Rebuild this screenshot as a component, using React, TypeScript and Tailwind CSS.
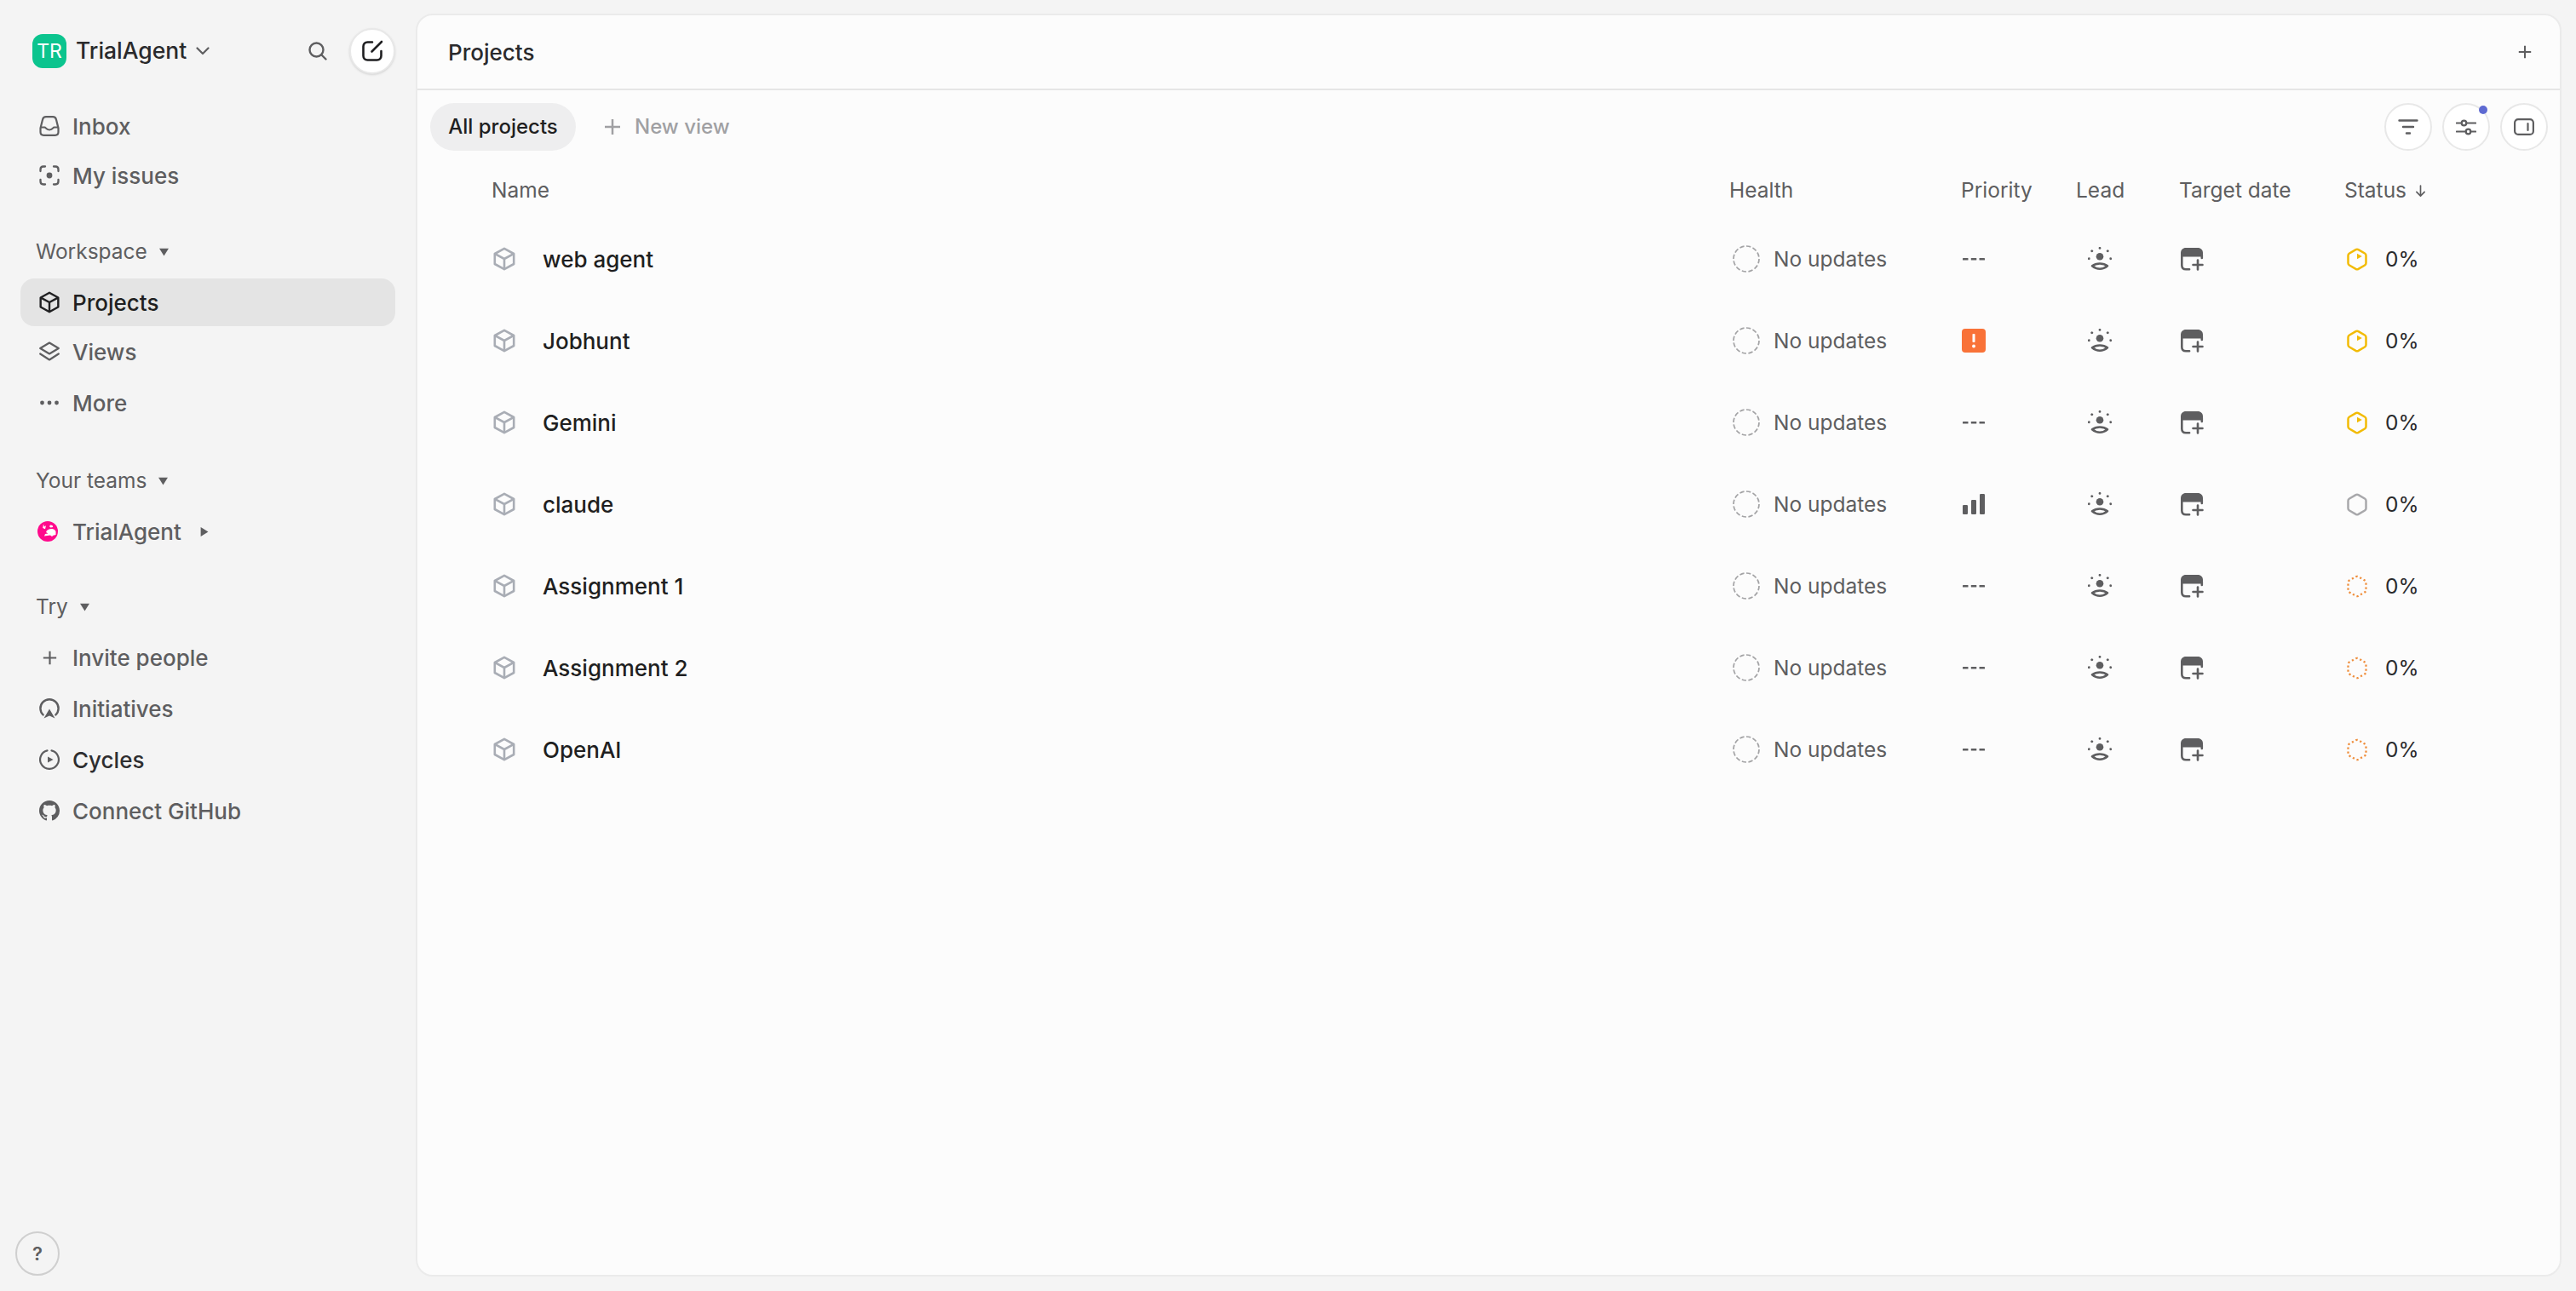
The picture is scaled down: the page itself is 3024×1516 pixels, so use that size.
import React from "react";

type IconProps = { className?: string };

const Cube = ({ className }: IconProps) => (
  <svg viewBox="0 0 26 28" fill="none" stroke="currentColor" strokeWidth="2.600" strokeLinejoin="round" className={className}>
    <path d="M13 1.800 24.200 8v12L13 26.200 1.800 20V8Z" />
    <path d="M2.200 8.200 13 14l10.800-5.800M13 14v12" />
  </svg>
);

const Inbox = ({ className }: IconProps) => (
  <svg viewBox="0 0 24 24" fill="none" stroke="currentColor" strokeWidth="2.200" className={className}>
    <path d="M1.500 14.500 4 4.500C4.500 2.400 6 1.200 8 1.200h8c2 0 3.500 1.200 4 3.300l2.500 10V19c0 2.200-1.500 3.800-3.800 3.800H5.300C3 22.800 1.500 21.200 1.500 19Z" />
    <path d="M1.500 13.500h5c1.200 0 1.700 3 5.500 3s4.300-3 5.500-3h5" />
  </svg>
);

const MyIssues = ({ className }: IconProps) => (
  <svg viewBox="0 0 24 24" fill="none" stroke="currentColor" strokeWidth="2.300" strokeLinecap="round" className={className}>
    <path d="M1.500 7V5c0-2 1.500-3.500 3.500-3.500h2M17 1.500h2c2 0 3.500 1.500 3.500 3.500v2M22.500 17v2c0 2-1.500 3.500-3.500 3.500h-2M7 22.500H5c-2 0-3.500-1.500-3.500-3.500v-2" />
    <circle cx="12" cy="12" r="3.400" fill="currentColor" stroke="none" />
  </svg>
);

const Layers = ({ className }: IconProps) => (
  <svg viewBox="0 0 24 24" fill="none" stroke="currentColor" strokeWidth="2.200" strokeLinejoin="round" strokeLinecap="round" className={className}>
    <path d="M12 1.500 22.800 8 12 14.500 1.200 8Z" />
    <path d="m1.200 14.500 10.800 7 10.800-7" />
  </svg>
);

const Dots = ({ className }: IconProps) => (
  <svg viewBox="0 0 24 24" fill="currentColor" className={className}>
    <circle cx="3.500" cy="12" r="2.400" />
    <circle cx="12" cy="12" r="2.400" />
    <circle cx="20.500" cy="12" r="2.400" />
  </svg>
);

const Plus = ({ className }: IconProps) => (
  <svg viewBox="0 0 20 20" fill="none" stroke="currentColor" strokeWidth="2.500" className={className}>
    <path d="M10 1v18M1 10h18" />
  </svg>
);

const Initiatives = ({ className }: IconProps) => (
  <svg viewBox="0 0 24 24" fill="none" className={className}>
    <path d="M4.700 19.500a10.600 10.600 0 1 1 14.600 0" stroke="currentColor" strokeWidth="2.400" strokeLinecap="round" />
    <path d="M12 12.500 18.500 23.500 12 20.500 5.500 23.500Z" fill="currentColor" />
  </svg>
);

const Cycles = ({ className }: IconProps) => (
  <svg viewBox="0 0 24 24" fill="none" className={className}>
    <path d="M9.500 1.400A10.900 10.900 0 1 0 14.500 1.400" stroke="currentColor" strokeWidth="2.200" strokeLinecap="round" />
    <path d="M10 8.500 16.500 12 10 15.500Z" fill="currentColor" />
  </svg>
);

const GitHub = ({ className }: IconProps) => (
  <svg viewBox="0 0 16 16" fill="currentColor" className={className}>
    <path d="M8 0C3.580 0 0 3.580 0 8c0 3.540 2.290 6.530 5.470 7.590.4.070.55-.17.55-.38 0-.19-.01-.82-.01-1.490-2.010.37-2.530-.49-2.690-.94-.09-.23-.48-.94-.82-1.130-.28-.15-.68-.52-.01-.53.63-.01 1.080.58 1.230.82.720 1.210 1.870.87 2.330.66.070-.52.280-.87.510-1.070-1.780-.2-3.640-.89-3.640-3.950 0-.87.310-1.590.820-2.150-.08-.2-.36-1.020.08-2.120 0 0 .67-.21 2.200.82.640-.18 1.320-.27 2-.27s1.360.09 2 .27c1.530-1.040 2.200-.82 2.200-.82.440 1.100.16 1.920.08 2.120.510.56.820 1.270.820 2.150 0 3.070-1.870 3.750-3.650 3.950.290.25.540.73.540 1.480 0 1.070-.01 1.930-.01 2.200 0 .21.150.46.550.38A8.010 8.010 0 0 0 16 8c0-4.420-3.580-8-8-8Z" />
  </svg>
);

const Caret = ({ className }: IconProps) => (
  <svg viewBox="0 0 10 10" fill="currentColor" className={className}>
    <path d="M0 1.500h10L5 9.500Z" />
  </svg>
);

const Team = ({ className }: IconProps) => (
  <svg viewBox="0 0 24 24" className={className}>
    <circle cx="12" cy="12" r="12" fill="#ff0a8c" />
    <path d="M7 3.500l1 3 2-1.200-1 4-2.800-1.300Z" fill="#fff" />
    <path d="M15 4.500c2.500 0 3.500 1.200 3 2.400l-2.500.6-1.500-1.300Z" fill="#fff" />
    <path d="M11 11c2-1.800 5-2.600 7.200-1.800 2 .7 3.300 1.900 3.300 3.300v3.500l-3 .7-1.500 1.300-2-1.500-3.500.4-3.500.6 1-2.600 3.500-.5-2.500-1.500Z" fill="#fff" />
  </svg>
);

const Filter = ({ className }: IconProps) => (
  <svg viewBox="0 0 24 20" fill="none" stroke="currentColor" strokeWidth="2.400" strokeLinecap="round" className={className}>
    <path d="M1.500 2.500h21M6 10h12M10 17.500h4" />
  </svg>
);

const Sliders = ({ className }: IconProps) => (
  <svg viewBox="0 0 24 20" fill="none" stroke="currentColor" strokeWidth="2.200" strokeLinecap="round" className={className}>
    <path d="M.8 5.500h6M12 5.500h11.200M.8 15.500h11M17 15.500h6.200" />
    <circle cx="9.500" cy="5.500" r="2.800" />
    <circle cx="14.500" cy="15.500" r="2.800" />
  </svg>
);

const Panel = ({ className }: IconProps) => (
  <svg viewBox="0 0 24 20" fill="none" stroke="currentColor" strokeWidth="2.200" strokeLinecap="round" className={className}>
    <rect x="1.100" y="1.100" width="21.800" height="17.800" rx="4" />
    <path d="M16.500 6v8" />
  </svg>
);

const Compose = ({ className }: IconProps) => (
  <svg viewBox="0 0 26 26" fill="none" stroke="currentColor" strokeWidth="2.600" strokeLinecap="round" className={className}>
    <path d="M13 2.500H7.500c-3 0-5 2-5 5v11c0 3 2 5 5 5h11c3 0 5-2 5-5V13" />
    <path d="M12.500 13.500 24 2" />
  </svg>
);

const Search = ({ className }: IconProps) => (
  <svg viewBox="0 0 22 22" fill="none" stroke="currentColor" strokeWidth="2.400" strokeLinecap="round" className={className}>
    <circle cx="9.500" cy="9.500" r="8" />
    <path d="m15.500 15.500 5 5" />
  </svg>
);

const Chevron = ({ className }: IconProps) => (
  <svg viewBox="0 0 16 10" fill="none" stroke="currentColor" strokeWidth="2.200" strokeLinecap="round" strokeLinejoin="round" className={className}>
    <path d="m1.500 1.500 6.500 6.500 6.500-6.500" />
  </svg>
);

const Health = () => (
  <svg viewBox="0 0 32 32" fill="none" stroke="#a3a3a5" strokeWidth="1.700" strokeDasharray="5.300 2.500" className="h-8 w-8 shrink-0">
    <circle cx="16" cy="16" r="15" />
  </svg>
);

const NoPriority = () => (
  <svg viewBox="0 0 28 28" fill="#5e5e60" className="h-7 w-7">
    <rect x="1" y="13" width="6.500" height="2.600" rx=".6" />
    <rect x="10.800" y="13" width="6.500" height="2.600" rx=".6" />
    <rect x="20.500" y="13" width="6.500" height="2.600" rx=".6" />
  </svg>
);

const Urgent = () => (
  <svg viewBox="0 0 28 28" className="h-7 w-7">
    <rect width="28" height="28" rx="4" fill="#f97238" />
    <rect x="12.500" y="6" width="3" height="10" rx=".8" fill="#fff" />
    <circle cx="14" cy="20.500" r="1.900" fill="#fff" />
  </svg>
);

const Medium = () => (
  <svg viewBox="0 0 28 28" fill="#5e5e60" className="h-7 w-7">
    <rect x="1" y="15" width="6" height="11" rx="1.200" />
    <rect x="11" y="9" width="6" height="17" rx="1.200" />
    <rect x="21" y="2" width="6" height="24" rx="1.200" />
  </svg>
);

const Lead = () => (
  <svg viewBox="0 0 28 28" fill="none" className="h-7 w-7">
    <circle cx="14" cy="11.300" r="4.300" fill="#5e5e60" />
    <path d="M14 1.300v.1M4.700 4.700l.1.100M23.300 4.700l-.1.100M1.300 13.700v.1M26.700 13.700v.1" stroke="#5e5e60" strokeWidth="2.800" strokeLinecap="round" />
    <path d="M5 22.300C8 20 11 19.500 14 19.500S20 20 23 22.300C20 24.800 17 25.800 14 25.800S8 24.800 5 22.300Z" stroke="#5e5e60" strokeWidth="2.600" strokeLinejoin="round" />
  </svg>
);

const TargetDate = () => (
  <svg viewBox="0 0 28 28" fill="none" className="h-7 w-7">
    <path d="M1 11.500V7C1 3.500 3.500 1 7 1h14c3.500 0 6 2.500 6 6v4.500Z" fill="#5e5e60" />
    <path d="M2.300 9v12.500c0 3 1.800 4.800 4.800 4.800h4M25.800 9v4" stroke="#5e5e60" strokeWidth="2.600" strokeLinecap="round" />
    <path d="M21 15.500v11M15.500 21h11" stroke="#5e5e60" strokeWidth="2.600" strokeLinecap="round" />
  </svg>
);

const hex =
  "M10.500 2.200Q12 1.400 13.500 2.200L21 6.500Q22.500 7.400 22.500 9V18Q22.500 19.600 21 20.500L13.500 24.800Q12 25.600 10.500 24.800L3 20.500Q1.500 19.600 1.500 18V9Q1.500 7.400 3 6.500Z";

const StatusIcon = ({ kind }: { kind: "started" | "planned" | "backlog" }) => {
  if (kind === "started")
    return (
      <svg viewBox="0 0 24 27" fill="none" className="h-[27px] w-6">
        <path d={hex} stroke="#f2bb05" strokeWidth="2.500" />
        <path d="M12 6.700 17.800 10 12 13.300Z" fill="#f2bb05" />
      </svg>
    );
  if (kind === "planned")
    return (
      <svg viewBox="0 0 24 27" fill="none" className="h-[27px] w-6">
        <path d={hex} stroke="#a8a8ab" strokeWidth="2.500" />
      </svg>
    );
  return (
    <svg viewBox="0 0 24 27" fill="none" className="h-[27px] w-6">
      <path d={hex} stroke="#ef8e3c" strokeWidth="2.300" strokeDasharray="2.200 2.800" />
    </svg>
  );
};

type Row = { name: string; priority: "none" | "urgent" | "medium"; status: "started" | "planned" | "backlog" };

const rows: Row[] = [
  { name: "web agent", priority: "none", status: "started" },
  { name: "Jobhunt", priority: "urgent", status: "started" },
  { name: "Gemini", priority: "none", status: "started" },
  { name: "claude", priority: "medium", status: "planned" },
  { name: "Assignment 1", priority: "none", status: "backlog" },
  { name: "Assignment 2", priority: "none", status: "backlog" },
  { name: "OpenAI", priority: "none", status: "backlog" },
];

const NavItem = ({
  icon,
  label,
  h = "h-[60px]",
  active,
  dark,
}: {
  icon: React.ReactNode;
  label: React.ReactNode;
  h?: string;
  active?: boolean;
  dark?: boolean;
}) => (
  <div
    className={`flex ${h} items-center gap-[15px] rounded-2xl pl-[22px] text-[26px] font-medium ${active ? "bg-[#e4e4e4] text-[#1f1f21]" : dark ? "text-[#2e2e30]" : "text-[#5e5e60]"}`}
  >
    <span className={`flex w-6 justify-center ${active ? "text-[#1f1f21]" : "text-[#5e5e60]"}`}>{icon}</span>
    {label}
  </div>
);

const SectionLabel = ({ label, gap }: { label: string; gap: string }) => (
  <div className={`flex h-[60px] items-center ${gap} pl-[18px] text-[24.500px] font-normal text-[#5e5e60]`}>
    {label}
    <Caret className="h-[11px] w-[11px] text-[#5e5e60]" />
  </div>
);

const RoundBtn = ({ children, dot }: { children: React.ReactNode; dot?: boolean }) => (
  <div className="relative flex h-14 w-14 items-center justify-center rounded-full border-2 border-[#e8e8e8] bg-white text-[#5e5e60]">
    {children}
    {dot && <span className="absolute right-[1px] top-[1px] h-[10px] w-[10px] rounded-full bg-[#5e6ad2]" />}
  </div>
);

export default function App() {
  return (
    <div className="flex h-[1516px] w-[3024px] overflow-hidden bg-[#f4f4f4] font-['Inter',sans-serif] antialiased">
      <aside className="flex w-[488px] shrink-0 flex-col pb-[18px] pl-6 pr-6 pt-[33px]">
        <div className="flex h-[54px] items-center">
          <div className="ml-[14px] flex h-10 w-10 items-center justify-center rounded-xl bg-[#0bc48e] text-[23px] font-normal text-white">TR</div>
          <span className="ml-[11px] text-[26.500px] font-medium text-[#2a2a2c]">TrialAgent</span>
          <Chevron className="ml-[11px] h-[10px] w-4 text-[#5e5e60]" />
          <Search className="ml-auto h-[22px] w-[22px] text-[#5e5e60]" />
          <div className="ml-[26px] flex h-[54px] w-[54px] items-center justify-center rounded-full border-2 border-[#e8e8e8] bg-white shadow-sm">
            <Compose className="h-[26px] w-[26px] text-[#1f1f21]" />
          </div>
        </div>

        <div className="mt-[32px] flex flex-col">
          <NavItem h="h-[58px]" icon={<Inbox className="h-6 w-6" />} label="Inbox" />
          <NavItem h="h-[58px]" icon={<MyIssues className="h-6 w-6" />} label="My issues" />
        </div>

        <div className="mt-[30px]">
          <SectionLabel label="Workspace" gap="gap-[14px]" />
        </div>
        <div className="mt-[2px] flex flex-col">
          <NavItem h="h-14" active icon={<Cube className="h-[26px] w-6" />} label="Projects" />
          <div className="mt-[2px]">
            <NavItem h="h-14" icon={<Layers className="h-6 w-6" />} label="Views" />
          </div>
          <div className="mt-[2px]">
            <NavItem icon={<Dots className="h-6 w-6" />} label="More" />
          </div>
        </div>

        <div className="mt-[31px]">
          <SectionLabel label="Your teams" gap="gap-[13px]" />
        </div>
        <NavItem
          icon={<Team className="-ml-[4px] h-6 w-6" />}
          label={
            <span className="flex items-center gap-[21px]">
              TrialAgent
              <Caret className="h-[11px] w-[11px] -rotate-90 text-[#5e5e60]" />
            </span>
          }
        />

        <div className="mt-[28px]">
          <SectionLabel label="Try" gap="gap-[14px]" />
        </div>
        <NavItem icon={<Plus className="h-[17px] w-[17px]" />} label="Invite people" />
        <NavItem icon={<Initiatives className="h-6 w-6" />} label="Initiatives" />
        <NavItem dark icon={<Cycles className="h-6 w-6" />} label="Cycles" />
        <NavItem icon={<GitHub className="h-6 w-6" />} label="Connect GitHub" />

        <div className="-ml-[6px] mt-auto flex h-[52px] w-[52px] items-center justify-center rounded-full border-2 border-[#cfcfcf] text-[22px] font-semibold text-[#5e5e60]">?</div>
      </aside>

      <main className="mb-[17px] mr-[17px] mt-[16px] flex flex-1 flex-col overflow-hidden rounded-[20px] border-2 border-[#ebebeb] bg-[#fcfcfc]">
        <header className="flex h-[88px] shrink-0 items-center justify-between border-b-2 border-[#e6e6e6] pl-[36px] pr-[33px] text-[26px] font-medium text-[#2a2a2c]">
          Projects
          <Plus className="h-4 w-4 text-[#5e5e60]" />
        </header>

        <div className="flex items-center pl-[15px] pr-[14px] pt-[15px]">
          <div className="flex h-14 w-[171px] items-center justify-center rounded-full bg-[#eeeeef] text-[24px] font-medium text-[#1f1f21]">All projects</div>
          <div className="ml-[33px] flex items-center gap-4 text-[24px] font-medium text-[#a0a0a3]">
            <Plus className="h-5 w-5" />
            New view
          </div>
          <div className="ml-auto flex gap-[12px]">
            <RoundBtn><Filter className="h-5 w-6" /></RoundBtn>
            <RoundBtn dot><Sliders className="h-5 w-6" /></RoundBtn>
            <RoundBtn><Panel className="h-5 w-6" /></RoundBtn>
          </div>
        </div>

        <div className="flex h-[68px] items-end pb-[3px] pl-[87px] text-[24.500px] font-normal text-[#5e5e60]">
          <div className="flex-1">Name</div>
          <div className="w-[272px]">Health</div>
          <div className="w-[135px]">Priority</div>
          <div className="w-[121px]">Lead</div>
          <div className="w-[194px]">Target date</div>
          <div className="flex w-[253px] items-center gap-[10px]">
            Status
            <svg viewBox="0 0 14 16" fill="none" stroke="currentColor" strokeWidth="1.800" strokeLinecap="round" strokeLinejoin="round" className="h-4 w-[13px]">
              <path d="M7 1.500V14M2 9.500 7 14.500 12 9.500" />
            </svg>
          </div>
        </div>

        <div className="mt-[11px] flex flex-col">
          {rows.map((r) => (
            <div key={r.name} className="flex h-24 items-center pl-[89px]">
              <div className="flex flex-1 items-center gap-[32px] text-[26px] font-medium text-[#1f1f21]">
                <Cube className="h-7 w-[26px] text-[#a9adb5]" />
                {r.name}
              </div>
              <div className="flex w-[268px] items-center gap-4 text-[24.500px] font-normal text-[#5e5e60]">
                <Health />
                No updates
              </div>
              <div className="w-[135px] pl-[1px]">
                {r.priority === "none" ? <NoPriority /> : r.priority === "urgent" ? <Urgent /> : <Medium />}
              </div>
              <div className="w-[121px] pl-[14px]"><Lead /></div>
              <div className="w-[194px] pl-[1px]"><TargetDate /></div>
              <div className="flex w-[253px] items-center gap-[21px] pl-[3px] text-[24.500px] font-normal text-[#2a2a2c]">
                <StatusIcon kind={r.status} />
                0%
              </div>
            </div>
          ))}
        </div>
      </main>
    </div>
  );
}
